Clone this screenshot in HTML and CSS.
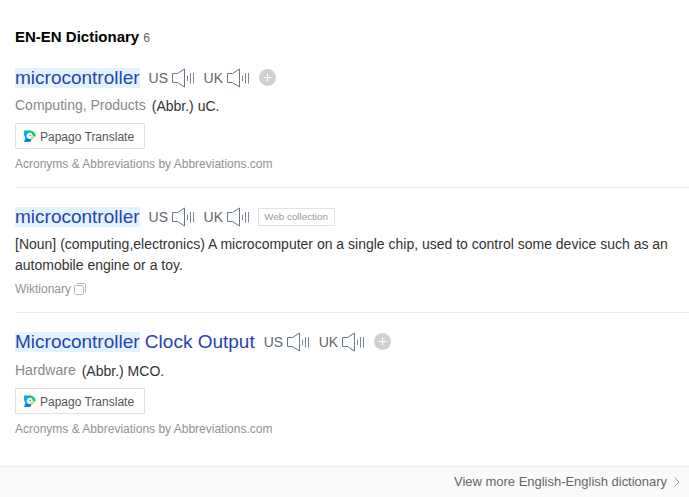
FILE: index.html
```html
<!DOCTYPE html>
<html lang="en">
<head>
<meta charset="utf-8">
<title>EN-EN Dictionary</title>
<link rel="stylesheet" href="styles.css">
</head>
<body>
<svg class="defs" width="0" height="0">
  <symbol id="speaker" viewBox="0 0 23 20">
    <path d="M.5 5.5H5.5L12.5 1V19L5.5 14.5H.5Z" fill="none" stroke="#68758c"/>
    <path d="M15.5 7.5V13M18.5 5V15.5M21.5 5V15.5" fill="none" stroke="#7b869a"/>
  </symbol>
  <symbol id="plus" viewBox="0 0 17 17">
    <circle cx="8.5" cy="8.5" r="8.5" fill="#d0d0d0"/>
    <path d="M4.5 8.5H12.5M8.5 4.5V12.5" stroke="#fff" stroke-width="1.2"/>
  </symbol>
  <symbol id="papago" viewBox="0 0 12 12">
    <path d="M0 .5H6L8 4L6 11.5H0L1.3 8L0 5Z" fill="#12a5f4"/>
    <path d="M4.5 .5C9 0 11.8 2.5 11.8 6.5H7L4 2.5Z" fill="#20c677"/>
    <path d="M2.6 5.8A3.1 3.1 0 0 1 8.7 5.2L8.3 8.2L6.5 9A3.3 3.3 0 0 1 2.6 5.8Z" fill="#e9fbff"/>
    <circle cx="6.3" cy="5.4" r=".6" fill="#315d88"/>
    <path d="M7.2 6.8L10.5 7.5L8 9.6L5.8 9Z" fill="#f3ca3d"/>
    <path d="M0 11.7L2.6 9L7.6 9.6L6.5 11.7Z" fill="#0879df"/>
  </symbol>
</svg>
<main>
  <h2>EN-EN Dictionary <span class="count">6</span></h2>
  <article class="entry first">
    <div class="head"><a class="word"><mark>microcontroller</mark></a><span class="lang">US</span><svg class="speaker"><use href="#speaker"/></svg><span class="lang">UK</span><svg class="speaker"><use href="#speaker"/></svg><svg class="plus"><use href="#plus"/></svg></div>
    <p class="mean"><span class="field">Computing, Products</span><span class="abbr">(Abbr.) uC.</span></p>
    <div class="papago"><svg><use href="#papago"/></svg><span>Papago Translate</span></div>
    <p class="source">Acronyms &amp; Abbreviations by Abbreviations.com</p>
  </article>
  <article class="entry">
    <div class="head"><a class="word"><mark>microcontroller</mark></a><span class="lang">US</span><svg class="speaker"><use href="#speaker"/></svg><span class="lang">UK</span><svg class="speaker"><use href="#speaker"/></svg><span class="tag">Web collection</span></div>
    <p class="definition">[Noun] (computing,electronics) A microcomputer on a single chip, used to control some device such as an<br>automobile engine or a toy.</p>
    <p class="source wiki">Wiktionary<svg class="copy" viewBox="0 0 12 12"><rect x=".5" y="2.5" width="9" height="9" rx="1"/><path d="M2.5 .5H10.5Q11.5 .5 11.5 1.5V9.5"/></svg></p>
  </article>
  <article class="entry last">
    <div class="head"><a class="word"><mark>Microcontroller</mark> Clock Output</a><span class="lang">US</span><svg class="speaker"><use href="#speaker"/></svg><span class="lang">UK</span><svg class="speaker"><use href="#speaker"/></svg><svg class="plus"><use href="#plus"/></svg></div>
    <p class="mean"><span class="field">Hardware</span><span class="abbr">(Abbr.) MCO.</span></p>
    <div class="papago"><svg><use href="#papago"/></svg><span>Papago Translate</span></div>
    <p class="source">Acronyms &amp; Abbreviations by Abbreviations.com</p>
  </article>
</main>
<footer><span>View more English-English dictionary</span><svg class="chevron" viewBox="0 0 6 10"><path d="M.7 .7L5 5L.7 9.3"/></svg></footer>
</body>
</html>
```
FILE: styles.css
```css
* { box-sizing: border-box; }
body {
  margin: 0;
  height: 497px;
  display: flex;
  flex-direction: column;
  overflow: hidden;
  background: #fff;
  font-family: "Liberation Sans", Arial, sans-serif;
  font-size: 14px;
  color: #333;
  white-space: nowrap;
}
h2, p { margin: 0; }
svg { display: block; flex: none; }
.defs { position: absolute; }
main { padding: 27px 0 0 15px; }
h2 {
  height: 20px;
  font-size: 15px;
  line-height: 20px;
  color: #000;
}
.count { font-size: 12px; font-weight: 400; color: #666; }
.entry { height: 125px; padding-top: 19px; border-bottom: 1px solid #ececec; }
.first { height: 141px; padding-top: 21px; }
.last { border: 0; }
.head { display: flex; align-items: center; height: 20px; }
.word { font-size: 19px; line-height: 20px; color: #2743b1; }
mark { display: inline-block; height: 20px; background: #e2f3fe; color: inherit; }
.lang { width: 23px; margin-left: 9px; line-height: 20px; color: #666; }
.speaker { width: 23px; height: 20px; }
.plus { width: 17px; height: 17px; margin-left: 9px; margin-bottom: 1px; }
.tag {
  height: 18px;
  width: 77px;
  margin-left: 8px;
  border: 1px solid #e2e2e2;
  color: #999;
  font-size: 9.8px;
  line-height: 16px;
  text-align: center;
}
.mean { display: flex; height: 20px; margin-top: 7px; line-height: 20px; }
.last .mean { margin-top: 8px; }
.field { color: #888; }
.abbr { margin-left: 6px; padding-top: 1px; }
.papago {
  display: flex;
  align-items: center;
  width: 130px;
  height: 26px;
  margin-top: 8px;
  padding-left: 8px;
  border: 1px solid #e2e2e2;
  color: #555;
  font-size: 12px;
}
.papago span { padding-top: 1px; }
.papago svg { width: 12px; height: 12px; margin-right: 4px; }
.source { height: 14px; margin-top: 8px; font-size: 12px; line-height: 14px; color: #929292; }
.definition { height: 41px; margin-top: 7px; line-height: 20.5px; }
.wiki { display: flex; align-items: center; margin-top: 7px; }
.copy { width: 12px; height: 12px; margin-left: 3px; fill: none; stroke: #b5b5b5; }
footer {
  display: flex;
  align-items: center;
  justify-content: flex-end;
  height: 31px;
  margin-top: auto;
  padding-right: 9px;
  background: #fafafa;
  border-top: 1px solid #ececec;
  color: #666;
  font-size: 13px;
  letter-spacing: -.02px;
}
footer span { padding-bottom: 1px; }
.chevron { width: 6px; height: 10px; margin-left: 7px; fill: none; stroke: #999; }
```
